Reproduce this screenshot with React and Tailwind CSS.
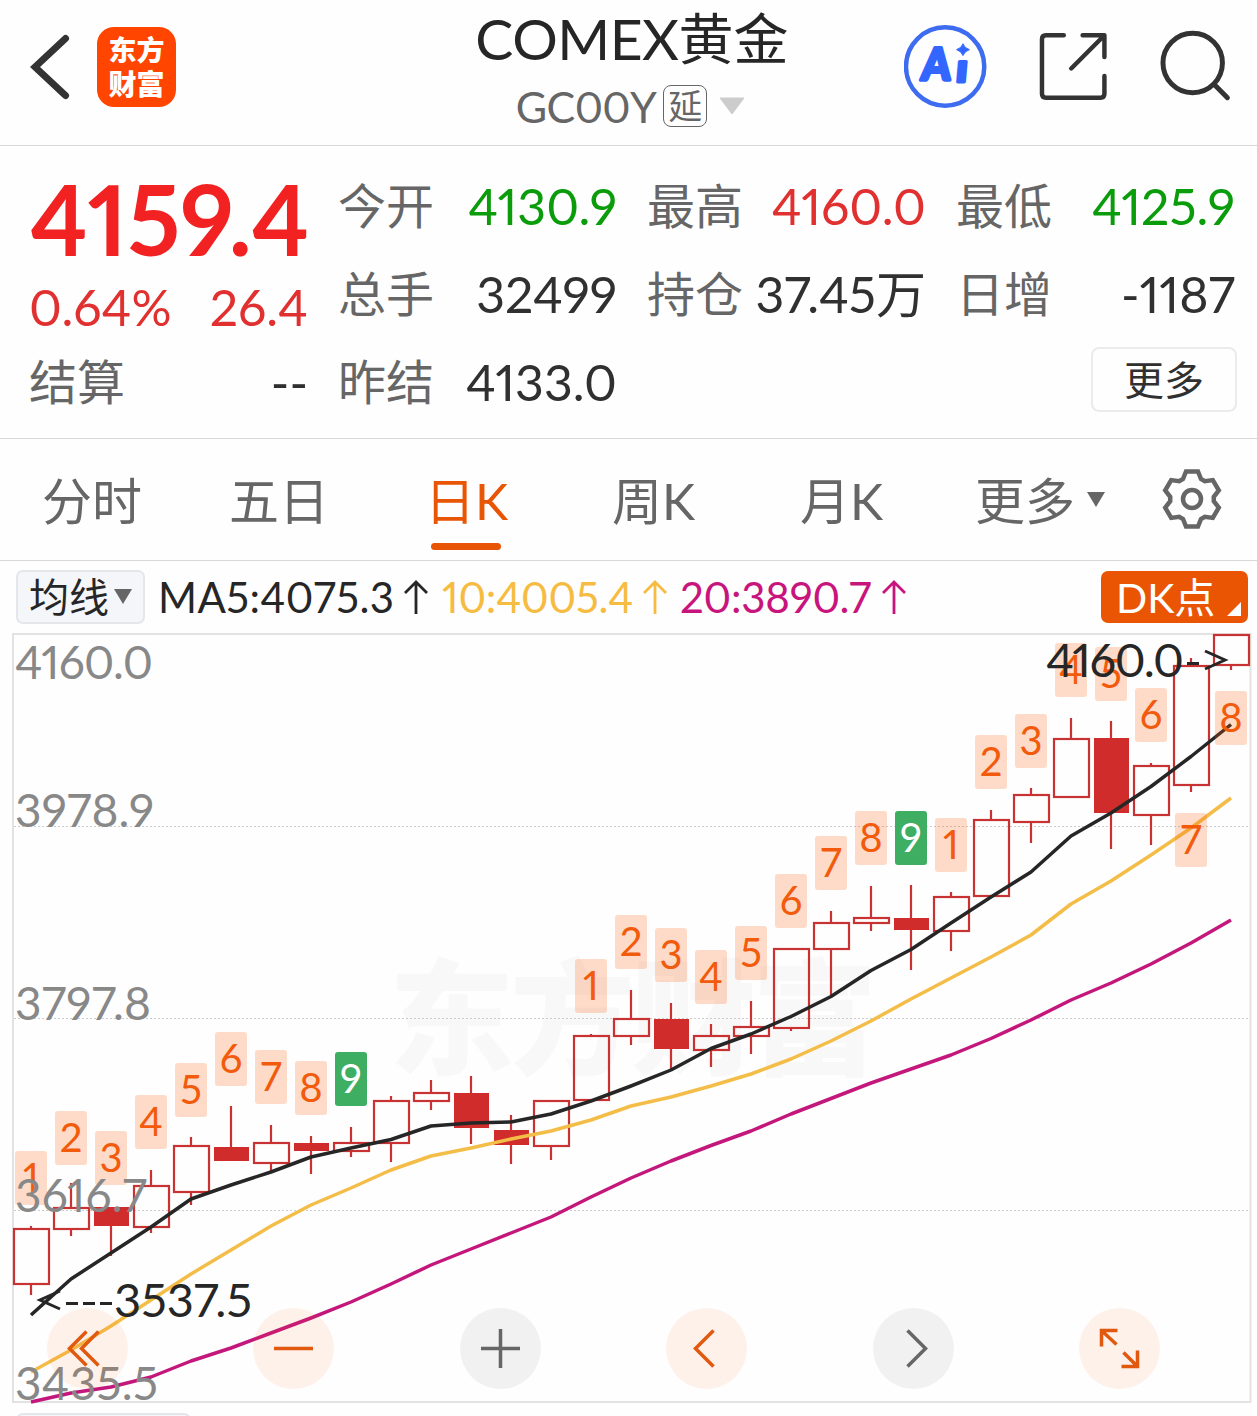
const UP = "#c83232";
const DARK = "#262626";

// [high, top, bottom, low, filled]
const candles = [
	[1226, 1229, 1284, 1295],
	[1183, 1208, 1229, 1236],
	[1207, 1207, 1226, 1256, true],
	[1170, 1186, 1227, 1233],
	[1137, 1146, 1192, 1205],
	[1106, 1147, 1161, 1161, true],
	[1125, 1143, 1163, 1172],
	[1136, 1143, 1151, 1174, true],
	[1127, 1143, 1151, 1157],
	[1096, 1101, 1143, 1162],
	[1080, 1093, 1101, 1110],
	[1076, 1093, 1128, 1144, true],
	[1115, 1130, 1145, 1164, true],
	[1101, 1101, 1146, 1160],
	[1034, 1036, 1100, 1101],
	[990, 1019, 1036, 1045],
	[1003, 1019, 1049, 1069, true],
	[1024, 1036, 1050, 1067],
	[1001, 1027, 1036, 1054],
	[949, 949, 1028, 1031],
	[911, 923, 949, 995],
	[886, 918, 923, 931],
	[885, 918, 930, 970, true],
	[892, 897, 931, 951],
	[810, 820, 896, 898],
	[788, 795, 822, 843],
	[718, 739, 797, 797],
	[721, 738, 813, 849, true],
	[763, 766, 815, 845],
	[658, 666, 785, 792],
	[635, 635, 665, 670]
];

// [candle index, label, top]
const badges = [
	[0, "1", 1151], [1, "2", 1111], [2, "3", 1131], [3, "4", 1095], [4, "5", 1063],
	[5, "6", 1032], [6, "7", 1050], [7, "8", 1061], [8, "9", 1052],
	[14, "1", 959], [15, "2", 915], [16, "3", 928], [17, "4", 950], [18, "5", 926],
	[19, "6", 874], [20, "7", 836], [21, "8", 811], [22, "9", 811], [23, "1", 818],
	[24, "2", 735], [25, "3", 714], [26, "4", 643], [27, "5", 647], [28, "6", 688],
	[29, "7", 813], [30, "8", 691]
];

const ma5 = [
	1315, 1279, 1253, 1227, 1199, 1185, 1172, 1157, 1148, 1139.5, 1126, 1123, 1122, 1114, 1101, 1086,
	1070, 1048.5, 1034, 1016.5, 996.5, 970.5, 949.5, 923, 897, 872, 836, 813, 786.5, 756.5, 724.5
];
const ma10 = [
	1372, 1350, 1326, 1300, 1274, 1250, 1226, 1205, 1188, 1170, 1156, 1148, 1139, 1131, 1120, 1106,
	1097, 1086, 1074, 1059, 1041, 1021, 999, 978, 957, 935, 904, 881, 855, 828, 798
];
const ma20 = [
	1402, 1393, 1387, 1377, 1361, 1348, 1333, 1318, 1302, 1284, 1265, 1249, 1233, 1217, 1197, 1178,
	1161, 1145.5, 1131, 1114, 1098.5, 1083, 1069, 1055, 1038.5, 1020, 1000, 983, 964, 943, 920
];

const axisLabels = [
	["4160.0", 679, 138],
	["3978.9", 827, 139],
	["3797.8", 1020, 136],
	["3616.7", 1212, 132],
	["3435.5", 1400, 143]
];

const cx = (i) => 31 + i * 40;
const toPoints = (values) => values.map((y, i) => `${cx(i)},${y}`).join(" ");

// outline of a gear with six teeth, centred on 0,0
const gearPoints = [0, 60, 120, 180, 240, 300]
	.flatMap((deg) => {
		const a = (deg * Math.PI) / 180;
		return [[-9, -20], [-6, -27.5], [6, -27.5], [9, -20]].map(
			([x, y]) =>
				`${(x * Math.cos(a) - y * Math.sin(a)).toFixed(1)},${(x * Math.sin(a) + y * Math.cos(a)).toFixed(1)}`
		);
	})
	.join(" ");

function Header() {
	return (
		<header className="flex h-[146px] shrink-0 items-start justify-between border-b border-[#d9d9d9] pl-[30px] pr-[26px]">
			<div className="flex w-[327px] items-center gap-[25px] pt-[27px]">
				<svg width="42" height="80" viewBox="30 27 42 80" fill="none" stroke="#333" strokeWidth="7" strokeLinecap="round">
					<path d="M65.500 38.500L35 67L65.500 95.500" />
				</svg>
				<div className="flex h-[80px] w-[79px] flex-col items-center justify-center rounded-[17px] bg-[#ff4500] text-[28px] font-black leading-[34px] text-white">
					<span>东方</span>
					<span>财富</span>
				</div>
			</div>
			<div className="flex flex-col items-center pt-[5px]">
				<h1 className="ml-[3px] flex h-[66px] items-center whitespace-nowrap text-[57px] leading-none text-[#262626]">
					<span className="tracking-[-0.5px]">COMEX</span>
					<span className="text-[55px]">黄金</span>
				</h1>
				<div className="flex h-[70px] items-center text-[43px] leading-none text-[#666]">
					<span className="tracking-[-0.6px]">GC00Y</span>
					<span className="ml-[7px] flex h-[42px] w-[44px] items-center justify-center rounded-[8px] border border-[#666] text-[34px]">延</span>
					<svg className="ml-[12px]" width="26" height="18" viewBox="0 0 26 18">
						<path d="M1 1H25L13 17Z" fill="#ccc" stroke="#ccc" strokeLinejoin="round" />
					</svg>
				</div>
			</div>
			<div className="flex w-[327px] justify-end gap-[50px] pt-[23px]">
				<svg width="86" height="86" viewBox="904 23 86 86">
					<circle cx="945.500" cy="66.500" r="39.500" fill="none" stroke="#3e6cf0" strokeWidth="4.500" />
					<g fill="#3366ff" stroke="#3366ff" strokeLinejoin="round" fontWeight="900">
						<text transform="translate(921 80) skewX(-5)" fontSize="45" strokeWidth="3.500" textLength="29" lengthAdjust="spacingAndGlyphs">A</text>
						<text transform="translate(955.5 82.500) skewX(-5)" fontSize="40" strokeWidth="3" textLength="12" lengthAdjust="spacingAndGlyphs">ı</text>
					</g>
					<path d="M963.500 43.500Q965 48 970 49.500Q965 51 963.500 55.500Q962 51 957 49.500Q962 48 963.500 43.500Z" fill="#3366ff" stroke="#3366ff" />
				</svg>
				<svg width="70" height="86" viewBox="1038 23 70 86" fill="none" stroke="#333" strokeWidth="4.500" strokeLinecap="round" strokeLinejoin="round">
					<path d="M1063 35H1045Q1041 35 1041 39V94Q1041 98 1045 98H1100Q1104 98 1104 94V76" />
					<path d="M1082 35H1104V57M1103 36L1070.500 68.500" />
				</svg>
				<svg width="73" height="86" viewBox="1158 23 73 86" fill="none" stroke="#333" strokeWidth="5" strokeLinecap="round">
					<circle cx="1192" cy="63" r="30" />
					<path d="M1214 85L1227 98" />
				</svg>
			</div>
		</header>
	);
}

function Stat({label, value, color = "text-[#303030]"}) {
	return (
		<div className="flex h-[88px] items-center justify-between whitespace-nowrap">
			<span className="-ml-px text-[48px] leading-none text-[#666]">{label}</span>
			<span className={`text-[50px] leading-none ${color}`}>{value}</span>
		</div>
	);
}

function Quote() {
	return (
		<section className="grid h-[293px] shrink-0 grid-cols-4 gap-x-[31px] border-b border-[#d9d9d9] pl-[30px] pr-[22px] pt-[16px]">
			<div className="flex flex-col">
				<div className="flex h-[112px] items-center whitespace-nowrap text-[97px] font-bold leading-none tracking-[-0.2px] text-[#f22222]">4159.4</div>
				<div className="mt-[2px] flex h-[62px] items-center justify-between text-[50px] leading-none text-[#e03030]">
					<span className="-ml-px">0.64%</span>
					<span>26.4</span>
				</div>
				<Stat label="结算" value="--" />
			</div>
			<div>
				<Stat label="今开" value="4130.9" color="text-[#0a9c0a]" />
				<Stat label="总手" value="32499" />
				<Stat label="昨结" value="4133.0" />
			</div>
			<div>
				<Stat label="最高" value="4160.0" color="text-[#e03030]" />
				<Stat label="持仓" value="37.45万" />
			</div>
			<div className="flex flex-col">
				<Stat label="最低" value="4125.9" color="text-[#0a9c0a]" />
				<Stat label="日增" value="-1187" />
				<button className="-mr-[2px] mt-[9px] h-[65px] w-[146px] self-end rounded-[8px] border-2 border-[#ebebeb] text-[40px] leading-none text-[#303030]">更多</button>
			</div>
		</section>
	);
}

function Tabs() {
	return (
		<nav className="flex h-[122px] shrink-0 items-start border-b border-[#d9d9d9] pl-[42px] pt-[27px] text-[50px] leading-[70px] text-[#666]">
			<span className="w-[187px]">分时</span>
			<span className="w-[202px]">五日</span>
			<span className="flex w-[181px] flex-col text-[#e85505]">
				<span className="-ml-[6px]">日K</span>
				<span className="mt-[7px] h-[7px] w-[70px] rounded-full bg-[#e85505]" />
			</span>
			<span className="w-[188px]">周K</span>
			<span className="w-[175px]">月K</span>
			<span className="flex w-[186px] items-center gap-[12px]">
				更多
				<svg className="mb-[4px]" width="18" height="15" viewBox="0 0 18 15">
					<path d="M0 0H18L9 15Z" fill="#666" />
				</svg>
			</span>
			<svg className="mt-[2px]" width="62" height="62" viewBox="-31 -31 62 62" fill="none" stroke="#666" strokeWidth="4.500">
				<polygon points={gearPoints} />
				<circle r="9" />
			</svg>
		</nav>
	);
}

function Average({text, className}) {
	return (
		<span className={`flex items-center justify-between ${className}`}>
			{text}
			<svg width="24" height="34" viewBox="0 0 24 34" fill="none" stroke="currentColor" strokeWidth="2.800">
				<path d="M12 34V2M1 13L12 2L23 13" />
			</svg>
		</span>
	);
}

function Averages() {
	return (
		<div className="flex h-[72px] shrink-0 items-center whitespace-nowrap pl-[16px] pr-[9px] text-[42px] leading-none">
			<button className="flex h-[54px] w-[129px] items-center justify-center gap-[5px] rounded-[7px] border-2 border-[#e4e6ea] bg-[#f5f6f9] text-[40px] leading-none text-[#262626]">
				均线
				<svg className="mb-[2px]" width="18" height="15" viewBox="0 0 18 15">
					<path d="M0 0H18L9 15Z" fill="#666" />
				</svg>
			</button>
			<Average text="MA5:4075.3" className="ml-[13px] w-[270px] tracking-[0.4px] text-[#262626]" />
			<Average text="10:4005.4" className="ml-[14px] w-[225px] tracking-[-0.2px] text-[#f5bc41]" />
			<Average text="20:3890.7" className="ml-[13px] w-[226px] tracking-[-0.2px] text-[#c8147d]" />
			<button className="relative ml-auto h-[52px] w-[147px] rounded-[7px] bg-[#ea5504] pl-[15px] text-left text-[41px] leading-none text-white">
				DK点
				<svg className="absolute bottom-[7px] right-[7px]" width="14" height="14" viewBox="0 0 14 14">
					<path d="M14 0V14H0Z" fill="#fff" />
				</svg>
			</button>
		</div>
	);
}

function Candle({index, data}) {
	const [high, top, bottom, low, filled] = data;
	const x = cx(index);
	return (
		<g stroke={UP} strokeWidth="2.200">
			<path d={`M${x} ${high}V${top}M${x} ${bottom}V${low}`} />
			{filled ? (
				<rect x={x - 17} y={top} width="35" height={bottom - top} fill="#d02c2c" stroke="none" />
			) : (
				<rect x={x - 17} y={top} width="35" height={bottom - top} fill="none" />
			)}
		</g>
	);
}

function Badge({index, label, top}) {
	const nine = label === "9";
	return (
		<g>
			<rect x={cx(index) - 16} y={top} width="32" height="54" rx="3" fill={nine ? "#3dae62" : "#ff5a0a"} fillOpacity={nine ? 1 : 0.22} />
			<text x={cx(index)} y={top + 40.5} textAnchor="middle" fontSize="40" fill={nine ? "#fff" : "#f25a0c"}>
				{label}
			</text>
		</g>
	);
}

function ControlButton({warm, children}) {
	return (
		<button className={`flex size-[81px] items-center justify-center rounded-full ${warm ? "bg-[#ff5500]/8 text-[#e0590f]" : "bg-black/5 text-[#666]"}`}>
			<svg width="81" height="81" viewBox="-40.500 -40.500 81 81" fill="none" stroke="currentColor" strokeWidth="3.500">
				{children}
			</svg>
		</button>
	);
}

function Chart() {
	return (
		<div className="relative h-[771px] shrink-0">
			<svg className="block" width="1257" height="771" viewBox="0 633 1257 771">
				<text x="389" y="1065" fontSize="125" fontWeight="900" textLength="488" fill="#f8f8f8">东方财富</text>
				<rect x="13" y="634" width="1237.500" height="768" fill="none" stroke="#e2e2e2" strokeWidth="2" />
				<path d="M14 826.500H1250M14 1018.500H1250M14 1210.500H1250" stroke="#ccc" strokeDasharray="2 2" />
				{candles.map((data, i) => (
					<Candle key={i} index={i} data={data} />
				))}
				<g fill="none" strokeWidth="3.500" strokeLinejoin="round">
					<polyline points={toPoints(ma5)} stroke={DARK} />
					<polyline points={toPoints(ma10)} stroke="#f3bd48" />
					<polyline points={toPoints(ma20)} stroke="#c4177c" />
				</g>
				{badges.map(([index, label, top]) => (
					<Badge key={index} index={index} label={label} top={top} />
				))}
				<g fontSize="46" fill="#888">
					{axisLabels.map(([label, y, width]) => (
						<text key={label} x="15" y={y} textLength={width}>
							{label}
						</text>
					))}
				</g>
				<g fontSize="47" fill={DARK}>
					<text x="1046" y="677" textLength="138">4160.0</text>
					<text x="114" y="1317" textLength="138">3537.5</text>
				</g>
				<g fill="none" stroke={DARK} strokeWidth="3">
					<path d="M1187 663.500H1199M1205 651L1225 660L1205 669" />
					<path d="M60 1291L40 1300L60 1309M66 1303.500H78M83 1303.500H95M100 1303.500H112" />
				</g>
			</svg>
			<div className="absolute left-[47px] top-[675px] flex w-[1113px] justify-between">
				<ControlButton warm>
					<path d="M-1 -17L-18 0L-1 17M11 -17L-6 0L11 17" />
				</ControlButton>
				<ControlButton warm>
					<path d="M-19.500 0H19.500" />
				</ControlButton>
				<ControlButton>
					<path d="M-19.500 0H19.500M0 -19.500V19.500" />
				</ControlButton>
				<ControlButton warm>
					<path d="M7 -18L-11 0L7 18" />
				</ControlButton>
				<ControlButton>
					<path d="M-6 -18L12 0L-6 18" />
				</ControlButton>
				<ControlButton warm>
					<path d="M-18 -2V-18H-2M-18 -18L-3 -4M18 2V18H2M18 18L4 4" />
				</ControlButton>
			</div>
		</div>
	);
}

export default function App() {
	return (
		<div className="flex h-[1416px] w-[1257px] flex-col overflow-hidden bg-[#fefefe] font-['Lato','Noto_Sans_CJK_SC',sans-serif] font-normal proportional-nums">
			<Header />
			<Quote />
			<Tabs />
			<Averages />
			<Chart />
			<div className="ml-[16px] mt-[9px] h-[54px] w-[175px] shrink-0 rounded-[7px] border-2 border-[#e4e6ea] bg-[#f5f6f9]" />
		</div>
	);
}
